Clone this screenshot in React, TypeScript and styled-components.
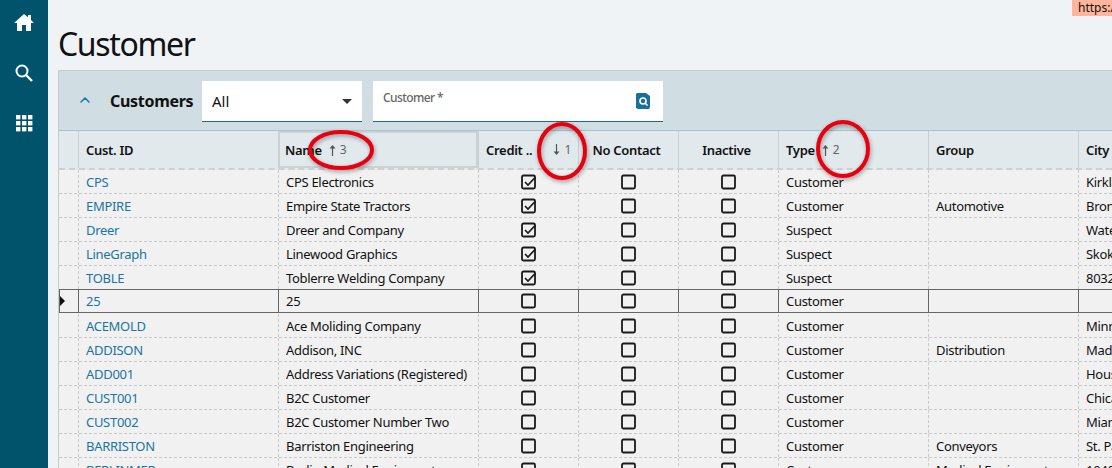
import styled, { createGlobalStyle } from 'styled-components';
import { ChevronUp } from 'lucide-react';

const COLUMNS = '19px 200px 200px 100px 100px 100px 150px 150px 60px';

const ROWS = [
  { id: 'CPS', name: 'CPS Electronics', credit: true, type: 'Customer', group: '', city: 'Kirkland' },
  { id: 'EMPIRE', name: 'Empire State Tractors', credit: true, type: 'Customer', group: 'Automotive', city: 'Bronx' },
  { id: 'Dreer', name: 'Dreer and Company', credit: true, type: 'Suspect', group: '', city: 'Waterloo' },
  { id: 'LineGraph', name: 'Linewood Graphics', credit: true, type: 'Suspect', group: '', city: 'Skokie' },
  { id: 'TOBLE', name: 'Toblerre Welding Company', credit: true, type: 'Suspect', group: '', city: '80321' },
  { id: '25', name: '25', credit: false, type: 'Customer', group: '', city: '', current: true },
  { id: 'ACEMOLD', name: 'Ace Moliding Company', credit: false, type: 'Customer', group: '', city: 'Minneapolis' },
  { id: 'ADDISON', name: 'Addison, INC', credit: false, type: 'Customer', group: 'Distribution', city: 'Madison' },
  { id: 'ADD001', name: 'Address Variations (Registered)', credit: false, type: 'Customer', group: '', city: 'Houston' },
  { id: 'CUST001', name: 'B2C Customer', credit: false, type: 'Customer', group: '', city: 'Chicago' },
  { id: 'CUST002', name: 'B2C Customer Number Two', credit: false, type: 'Customer', group: '', city: 'Miami' },
  { id: 'BARRISTON', name: 'Barriston Engineering', credit: false, type: 'Customer', group: 'Conveyors', city: 'St. Paul' },
  { id: 'BERLINMER', name: 'Berlin Medical Equipment', credit: false, type: 'Customer', group: 'Medical Equipment', city: '1040' },
];

const GlobalStyle = createGlobalStyle`
  html, body {
    margin: 0;
    height: 100%;
    overflow: hidden;
    background: #eff3f6;
  }
`;

const Shell = styled.div`
  display: flex;
  position: relative;
  width: 1112px;
  height: 468px;
  overflow: hidden;
  font-family: 'Noto Sans', 'Open Sans', sans-serif;
  font-size: 13px;
  letter-spacing: -0.3px;
  color: #111;
`;

const Sidebar = styled.nav`
  display: flex;
  flex-direction: column;
  align-items: center;
  gap: 31px;
  flex: none;
  width: 48px;
  padding-top: 12px;
  background: #00536a;
`;

const Main = styled.main`
  flex: none;
  width: 1064px;
  padding: 24px 0 0 10px;
  box-sizing: border-box;
`;

const Title = styled.h1`
  margin: 0;
  height: 46px;
  font-size: 32px;
  line-height: 40px;
  font-weight: 400;
  letter-spacing: -1.35px;
  color: #111;
`;

const Panel = styled.section`
  border-top: 1px solid #c6cdd0;
  border-left: 1px solid #c6cdd0;
  background: #f1f1f1;
`;

const Toolbar = styled.div`
  display: flex;
  align-items: flex-start;
  height: 60px;
  padding-top: 10px;
  box-sizing: border-box;
  background: #d0dde2;
  border-bottom: 1px solid #a4c4d0;
`;

const Collapse = styled.span`
  display: flex;
  justify-content: center;
  width: 51px;
  margin-top: 11px;
  color: #1b75a0;
`;

const PanelName = styled.span`
  width: 92px;
  margin-top: 10px;
  font-size: 16px;
  line-height: 20px;
  font-weight: 700;
`;

const Select = styled.div`
  display: flex;
  align-items: center;
  justify-content: space-between;
  width: 160px;
  height: 41px;
  padding: 0 10px;
  box-sizing: border-box;
  background: #fff;
  border-bottom: 1px solid #1b6a8c;
  font-size: 15px;
  letter-spacing: 0;
`;

const Caret = styled.span`
  width: 0;
  height: 0;
  border-left: 5px solid transparent;
  border-right: 5px solid transparent;
  border-top: 5px solid #333;
`;

const SearchField = styled.div`
  display: flex;
  justify-content: space-between;
  width: 290px;
  height: 41px;
  margin-left: 11px;
  padding: 8px 13px 0 10px;
  box-sizing: border-box;
  background: #fff;
  border-bottom: 1px solid #1b6a8c;
  font-size: 12px;
  font-weight: 500;
  letter-spacing: -0.6px;
  color: #666;
`;

const SearchIcon = styled.svg`
  width: 14px;
  height: 16px;
  margin-top: 4px;
`;

const HeaderRow = styled.div`
  display: grid;
  grid-template-columns: ${COLUMNS};
  height: 39px;
  background: #e2e9ed;
  border-bottom: 2px dashed #cfcfcf;
  box-sizing: border-box;
`;

const HeaderCell = styled.div<{ $focused?: boolean; $center?: boolean }>`
  display: flex;
  align-items: center;
  justify-content: ${({ $center }) => ($center ? 'center' : 'flex-start')};
  gap: 7px;
  padding: 0 ${({ $focused }) => ($focused ? '5px' : '7px')};
  padding-right: ${({ $center }) => ($center ? '11px' : undefined)};
  box-sizing: border-box;
  border-left: 1px solid #c9d0d3;
  border: ${({ $focused }) => ($focused ? '2px solid #ccd2d4' : undefined)};
  font-weight: 600;
  white-space: nowrap;
  overflow: hidden;
`;

const SortMark = styled.span<{ $end?: boolean }>`
  display: flex;
  align-items: center;
  gap: 4px;
  margin-left: ${({ $end }) => ($end ? 'auto' : '0')};
  font-size: 12px;
  font-weight: 400;
  color: #666;
`;

const Row = styled.div<{ $current?: boolean }>`
  display: grid;
  grid-template-columns: ${COLUMNS};
  height: 24px;
  box-sizing: border-box;
  background: #f1f1f1;
  border-bottom: 1px dashed #c9c9c9;
  ${({ $current }) =>
    $current &&
    `
    border-top: 1px solid #666;
    border-bottom: 1px solid #666;
    box-shadow: inset 1px 0 0 #666;
    margin: -1px 0 1px;
  `}
`;

const Cell = styled.div<{ $current?: boolean; $center?: boolean; $link?: boolean }>`
  display: flex;
  align-items: center;
  justify-content: ${({ $center }) => ($center ? 'center' : 'flex-start')};
  padding: 0 7px;
  box-sizing: border-box;
  border-left: 1px ${({ $current }) => ($current ? 'solid #666' : 'dashed #c9c9c9')};
  color: ${({ $link }) => ($link ? '#1b75a0' : 'inherit')};
  white-space: nowrap;
  overflow: hidden;
`;

const Indicator = styled.div`
  display: flex;
  align-items: center;
  padding-left: 1px;
`;

const RowArrow = styled.span`
  width: 0;
  height: 0;
  border-top: 5px solid transparent;
  border-bottom: 5px solid transparent;
  border-left: 5px solid #111;
`;

const Checkbox = styled.svg`
  width: 16px;
  height: 16px;
`;

const Badge = styled.div`
  position: absolute;
  top: 0;
  left: 1072px;
  width: 40px;
  height: 16px;
  padding-left: 6px;
  box-sizing: border-box;
  overflow: hidden;
  background: #ffb59b;
  font-size: 12px;
  line-height: 15px;
  letter-spacing: 0;
`;

const Annotation = styled.svg<{ $left: number; $top: number }>`
  position: absolute;
  left: ${({ $left }) => $left}px;
  top: ${({ $top }) => $top}px;
  overflow: visible;
  filter: drop-shadow(1px 2px 2px rgba(0, 0, 0, 0.35));
`;

const Arrow = ({ down }: { down?: boolean }) => (
  <svg width="7" height="12" viewBox="0 0 7 12">
    <path d={down ? 'M3.5 0V8' : 'M3.5 12V4'} stroke="#555" strokeWidth="1.2" />
    <path d={down ? 'M0.5 7.5h6L3.5 11z' : 'M0.5 4.5h6L3.5 1z'} fill="#555" />
  </svg>
);

const Box = ({ checked }: { checked: boolean }) => (
  <Checkbox viewBox="0 0 16 16">
    <rect x="1" y="1.5" width="13" height="13" rx="1.5" fill="none" stroke="#1a1a1a" strokeWidth="1.8" />
    {checked && <path d="M4 8l3 3 7.5-8" fill="none" stroke="#1a1a1a" strokeWidth="1.7" />}
  </Checkbox>
);

export default function App() {
  return (
    <Shell>
      <GlobalStyle />
      <Sidebar>
        <svg width="20" height="20" viewBox="0 0 20 20">
          <path d="M10 2 0 11h3v8h5v-6h4v6h5v-8h3l-3-3V3h-3v2.2z" fill="#fff" />
        </svg>
        <svg width="20" height="20" viewBox="0 0 20 20">
          <circle cx="8" cy="8" r="5.5" fill="none" stroke="#fff" strokeWidth="2" />
          <path d="M12 12l6 6" stroke="#fff" strokeWidth="2.4" />
        </svg>
        <svg width="18" height="18" viewBox="0 0 18 18" fill="#fff">
          {[1, 7, 13].flatMap((y) =>
            [1, 7, 13].map((x) => <rect key={`${x}-${y}`} x={x} y={y} width="4.4" height="4.4" />),
          )}
        </svg>
      </Sidebar>
      <Main>
        <Title>Customer</Title>
        <Panel>
          <Toolbar>
            <Collapse>
              <ChevronUp size={16} strokeWidth={2.2} />
            </Collapse>
            <PanelName>Customers</PanelName>
            <Select>
              All
              <Caret />
            </Select>
            <SearchField>
              Customer *
              <SearchIcon viewBox="0 0 14 16">
                <path d="M1 0h9l4 3v11l-1 2H2l-2-1V1z" fill="#1b6f9c" />
                <circle cx="7" cy="8" r="3" fill="none" stroke="#fff" strokeWidth="1.6" />
                <path d="M9 10l2.5 2.5" stroke="#fff" strokeWidth="1.6" />
              </SearchIcon>
            </SearchField>
          </Toolbar>
          <HeaderRow>
            <div />
            <HeaderCell>Cust. ID</HeaderCell>
            <HeaderCell $focused>
              Name
              <SortMark>
                <Arrow />3
              </SortMark>
            </HeaderCell>
            <HeaderCell>
              Credit ..
              <SortMark $end>
                <Arrow down />1
              </SortMark>
            </HeaderCell>
            <HeaderCell $center>No Contact</HeaderCell>
            <HeaderCell $center>Inactive</HeaderCell>
            <HeaderCell>
              Type
              <SortMark>
                <Arrow />2
              </SortMark>
            </HeaderCell>
            <HeaderCell>Group</HeaderCell>
            <HeaderCell>City</HeaderCell>
          </HeaderRow>
          {ROWS.map((row) => (
            <Row key={row.id} $current={row.current}>
              <Indicator>{row.current && <RowArrow />}</Indicator>
              <Cell $current={row.current} $link>
                {row.id}
              </Cell>
              <Cell $current={row.current}>{row.name}</Cell>
              <Cell $current={row.current} $center>
                <Box checked={row.credit} />
              </Cell>
              <Cell $current={row.current} $center>
                <Box checked={false} />
              </Cell>
              <Cell $current={row.current} $center>
                <Box checked={false} />
              </Cell>
              <Cell $current={row.current}>{row.type}</Cell>
              <Cell $current={row.current}>{row.group}</Cell>
              <Cell $current={row.current}>{row.city}</Cell>
            </Row>
          ))}
        </Panel>
      </Main>
      <Badge>https://</Badge>
      <Annotation $left={308} $top={130} width="66" height="40">
        <ellipse cx="33" cy="20" rx="31" ry="18" fill="none" stroke="#e8000f" strokeWidth="4" />
      </Annotation>
      <Annotation $left={537} $top={122} width="50" height="58">
        <ellipse cx="25" cy="29" rx="23" ry="27" fill="none" stroke="#e8000f" strokeWidth="4" />
      </Annotation>
      <Annotation $left={816} $top={120} width="54" height="58">
        <ellipse cx="27" cy="29" rx="25" ry="27" fill="none" stroke="#e8000f" strokeWidth="4" />
      </Annotation>
    </Shell>
  );
}
